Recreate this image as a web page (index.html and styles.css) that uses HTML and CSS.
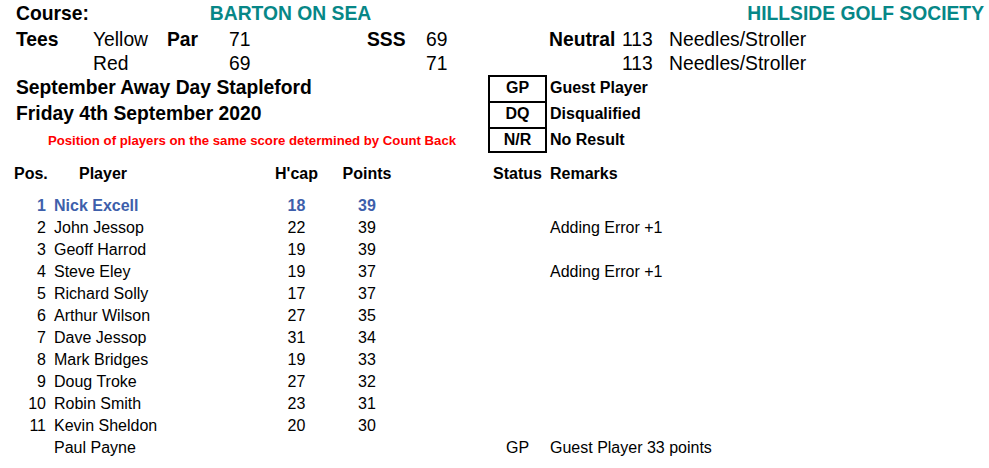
FILE: index.html
```html
<!DOCTYPE html>
<html lang="en">
<head>
<meta charset="utf-8">
<title>Hillside Golf Society - Barton on Sea</title>
<link rel="stylesheet" href="styles.css">
</head>
<body>
<div class="sheet">
  <section class="top">
    <div class="top-row r27">
      <div class="c1 b">Course:</div>
      <div class="c2-6 b teal center">BARTON ON SEA</div>
      <div class="c8-10 b teal right">HILLSIDE GOLF SOCIETY</div>
    </div>
    <div class="top-row r26">
      <div class="c1 b">Tees</div>
      <div class="c2">Yellow</div>
      <div class="c3 b">Par</div>
      <div class="c4">71</div>
      <div class="c5 b">SSS</div>
      <div class="c6">69</div>
      <div class="c8 b pad">Neutral</div>
      <div class="c9">113</div>
      <div class="c10">Needles/Stroller</div>
    </div>
    <div class="top-row r22">
      <div class="c2">Red</div>
      <div class="c4">69</div>
      <div class="c6">71</div>
      <div class="c9">113</div>
      <div class="c10">Needles/Stroller</div>
    </div>
    <div class="top-row r26">
      <div class="c1-6 b">September Away Day Stapleford</div>
      <div class="c7 box">GP</div>
      <div class="c8-10 legend">Guest Player</div>
    </div>
    <div class="top-row r26">
      <div class="c1-6 b">Friday 4th September 2020</div>
      <div class="c7 box">DQ</div>
      <div class="c8-10 legend">Disqualified</div>
    </div>
    <div class="top-row r26">
      <div class="c1-6 note">Position of players on the same score determined by Count Back</div>
      <div class="c7 box last">N/R</div>
      <div class="c8-10 legend">No Result</div>
    </div>
  </section>

  <section class="results">
    <div class="res-row head">
      <div class="pos-h">Pos.</div>
      <div class="name player-h">Player</div>
      <div class="hcap">H'cap</div>
      <div class="pts">Points</div>
      <div class="status">Status</div>
      <div class="remarks">Remarks</div>
    </div>
    <div class="res-row winner">
      <div class="pos">1</div><div class="name">Nick Excell</div><div class="hcap">18</div><div class="pts">39</div>
    </div>
    <div class="res-row">
      <div class="pos">2</div><div class="name">John Jessop</div><div class="hcap">22</div><div class="pts">39</div><div class="remarks">Adding Error +1</div>
    </div>
    <div class="res-row">
      <div class="pos">3</div><div class="name">Geoff Harrod</div><div class="hcap">19</div><div class="pts">39</div>
    </div>
    <div class="res-row">
      <div class="pos">4</div><div class="name">Steve Eley</div><div class="hcap">19</div><div class="pts">37</div><div class="remarks">Adding Error +1</div>
    </div>
    <div class="res-row">
      <div class="pos">5</div><div class="name">Richard Solly</div><div class="hcap">17</div><div class="pts">37</div>
    </div>
    <div class="res-row">
      <div class="pos">6</div><div class="name">Arthur Wilson</div><div class="hcap">27</div><div class="pts">35</div>
    </div>
    <div class="res-row">
      <div class="pos">7</div><div class="name">Dave Jessop</div><div class="hcap">31</div><div class="pts">34</div>
    </div>
    <div class="res-row">
      <div class="pos">8</div><div class="name">Mark Bridges</div><div class="hcap">19</div><div class="pts">33</div>
    </div>
    <div class="res-row">
      <div class="pos">9</div><div class="name">Doug Troke</div><div class="hcap">27</div><div class="pts">32</div>
    </div>
    <div class="res-row">
      <div class="pos">10</div><div class="name">Robin Smith</div><div class="hcap">23</div><div class="pts">31</div>
    </div>
    <div class="res-row">
      <div class="pos">11</div><div class="name">Kevin Sheldon</div><div class="hcap">20</div><div class="pts">30</div>
    </div>
    <div class="res-row">
      <div class="name">Paul Payne</div><div class="status">GP</div><div class="remarks">Guest Player 33 points</div>
    </div>
  </section>
</div>
</body>
</html>
```

FILE: styles.css
```css
* { box-sizing: border-box; }
html, body { margin: 0; padding: 0; background: #fff; }
body {
  font-family: "Liberation Sans", Arial, sans-serif;
  color: #000;
  width: 989px;
  height: 468px;
  overflow: hidden;
}
.sheet { width: 989px; }

/* ---------- top block ---------- */
.top-row {
  display: grid;
  grid-template-columns: 77px 74px 62px 138px 59px 62px 59px 75px 47px 1fr;
  padding-left: 16px;
  font-size: 19.3px;
  white-space: nowrap;
}
.r27 { height: 27px; line-height: 27px; }
.r26 { height: 26px; line-height: 26px; }
.r22 { height: 22px; line-height: 22px; }

.c1 { grid-column: 1; }
.c2 { grid-column: 2; }
.c3 { grid-column: 3; }
.c4 { grid-column: 4; }
.c5 { grid-column: 5; }
.c6 { grid-column: 6; }
.c7 { grid-column: 7; }
.c8 { grid-column: 8; }
.c9 { grid-column: 9; }
.c10 { grid-column: 10; }
.c1-6 { grid-column: 1 / 7; }
.c2-6 { grid-column: 2 / 7; }
.c8-10 { grid-column: 8 / 11; }

.b { font-weight: bold; }
.teal { color: #078787; }
.center { text-align: center; }
.right { text-align: right; padding-right: 5px; }
.pad { padding-left: 2px; }

.note {
  color: #ff0000;
  font-weight: bold;
  font-size: 13.2px;
  text-align: center;
  padding-top: 1px;
}

.box {
  height: 26px;
  border: 2px solid #000;
  border-bottom: 0;
  font-size: 16px;
  font-weight: bold;
  line-height: 22px;
  text-align: center;
}
.box.last { border-bottom: 2px solid #000; }
.legend {
  font-size: 16px;
  font-weight: bold;
  padding-left: 3px;
}

/* ---------- results table ---------- */
.res-row {
  display: grid;
  grid-template-columns: 32px 8px 207px 71px 70px 86px 59px 1fr;
  padding-left: 14px;
  height: 22px;
  line-height: 22px;
  font-size: 16px;
  white-space: nowrap;
}
.res-row.head {
  height: 42px;
  line-height: 41px;
  font-weight: bold;
}
.pos, .pos-h { grid-column: 1; }
.pos { text-align: right; }
.name { grid-column: 3; }
.player-h { padding-left: 25px; }
.hcap { grid-column: 4; text-align: center; }
.pts { grid-column: 5; text-align: center; }
.status { grid-column: 7; text-align: center; }
.remarks { grid-column: 8; padding-left: 3px; }

.winner { color: #3e5fab; font-weight: bold; }
```
